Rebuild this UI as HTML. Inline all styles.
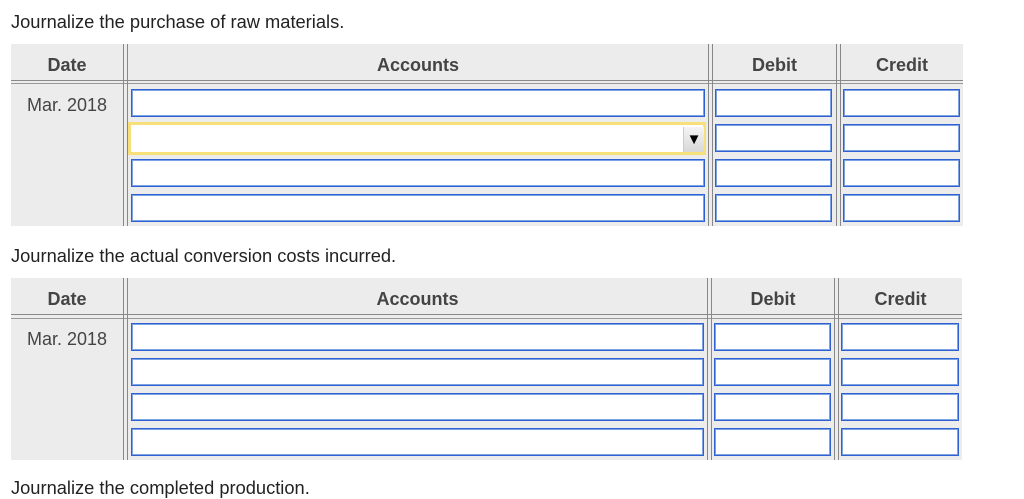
<!DOCTYPE html>
<html><head><style>
body{margin:0;width:1024px;height:487px;background:#fff;position:relative;overflow:hidden;font-family:"Liberation Sans",Arial,sans-serif}
.a{position:absolute}
.t{font-size:18.3px;color:#222}
.bg{background:#ececec}
.v{width:1px;background:#888}
.h{height:1px;background:#888}
.hd{font-size:18px;font-weight:bold;color:#444;text-align:center}
.in{position:absolute;background:#fff;border:1px solid #2f62d0;box-sizing:border-box;box-shadow:inset 0 0 0 1px #7da2e4}
.dt{font-size:18px;color:#444}
</style></head><body>
<div class="a t" style="left:11px;top:11px">Journalize the purchase of raw materials.</div>

<div class="a bg" style="left:11px;top:44px;width:952px;height:182px"></div>
<div class="a h" style="left:11px;top:80px;width:952px"></div>
<div class="a h" style="left:11px;top:83px;width:952px;background:#999"></div>
<div class="a v" style="left:123px;top:44px;height:182px"></div>
<div class="a v" style="left:127px;top:44px;height:182px"></div>
<div class="a v" style="left:708px;top:44px;height:182px"></div>
<div class="a v" style="left:712px;top:44px;height:182px"></div>
<div class="a v" style="left:836px;top:44px;height:182px"></div>
<div class="a v" style="left:840px;top:44px;height:182px"></div>
<div class="a hd" style="left:11px;top:55px;width:112px">Date</div>
<div class="a hd" style="left:128px;top:55px;width:580px">Accounts</div>
<div class="a hd" style="left:713px;top:55px;width:123px">Debit</div>
<div class="a hd" style="left:841px;top:55px;width:122px">Credit</div>
<div class="a dt" style="left:27px;top:95px">Mar. 2018</div>
<div class="in" style="left:131px;top:89px;width:574px;height:28px"></div>
<div class="a" style="left:128px;top:122px;width:578px;height:33px;background:#fff;border:3px solid #f7e07a;box-sizing:border-box"></div>
<div class="a" style="left:683px;top:127px;width:20px;height:25px;background:linear-gradient(#f4f4f4,#d8d8d8);border-left:1px solid #ccc;font-size:15px;text-align:center;line-height:25px;color:#000">▼</div>
<div class="in" style="left:131px;top:159px;width:574px;height:28px"></div>
<div class="in" style="left:131px;top:194px;width:574px;height:28px"></div>
<div class="in" style="left:715px;top:89px;width:117px;height:28px"></div>
<div class="in" style="left:715px;top:124px;width:117px;height:28px"></div>
<div class="in" style="left:715px;top:159px;width:117px;height:28px"></div>
<div class="in" style="left:715px;top:194px;width:117px;height:28px"></div>
<div class="in" style="left:843px;top:89px;width:117px;height:28px"></div>
<div class="in" style="left:843px;top:124px;width:117px;height:28px"></div>
<div class="in" style="left:843px;top:159px;width:117px;height:28px"></div>
<div class="in" style="left:843px;top:194px;width:117px;height:28px"></div>

<div class="a t" style="left:11px;top:245px">Journalize the actual conversion costs incurred.</div>

<div class="a bg" style="left:11px;top:278px;width:951px;height:182px"></div>
<div class="a h" style="left:11px;top:314px;width:951px"></div>
<div class="a h" style="left:11px;top:318px;width:951px;background:#999"></div>
<div class="a v" style="left:123px;top:278px;height:182px"></div>
<div class="a v" style="left:127px;top:278px;height:182px"></div>
<div class="a v" style="left:707px;top:278px;height:182px"></div>
<div class="a v" style="left:711px;top:278px;height:182px"></div>
<div class="a v" style="left:834px;top:278px;height:182px"></div>
<div class="a v" style="left:838px;top:278px;height:182px"></div>
<div class="a hd" style="left:11px;top:289px;width:112px">Date</div>
<div class="a hd" style="left:128px;top:289px;width:579px">Accounts</div>
<div class="a hd" style="left:712px;top:289px;width:122px">Debit</div>
<div class="a hd" style="left:839px;top:289px;width:123px">Credit</div>
<div class="a dt" style="left:27px;top:329px">Mar. 2018</div>
<div class="in" style="left:131px;top:323px;width:573px;height:28px"></div>
<div class="in" style="left:131px;top:358px;width:573px;height:28px"></div>
<div class="in" style="left:131px;top:393px;width:573px;height:28px"></div>
<div class="in" style="left:131px;top:428px;width:573px;height:28px"></div>
<div class="in" style="left:714px;top:323px;width:117px;height:28px"></div>
<div class="in" style="left:714px;top:358px;width:117px;height:28px"></div>
<div class="in" style="left:714px;top:393px;width:117px;height:28px"></div>
<div class="in" style="left:714px;top:428px;width:117px;height:28px"></div>
<div class="in" style="left:841px;top:323px;width:118px;height:28px"></div>
<div class="in" style="left:841px;top:358px;width:118px;height:28px"></div>
<div class="in" style="left:841px;top:393px;width:118px;height:28px"></div>
<div class="in" style="left:841px;top:428px;width:118px;height:28px"></div>

<div class="a t" style="left:11px;top:477px">Journalize the completed production.</div>
</body></html>
